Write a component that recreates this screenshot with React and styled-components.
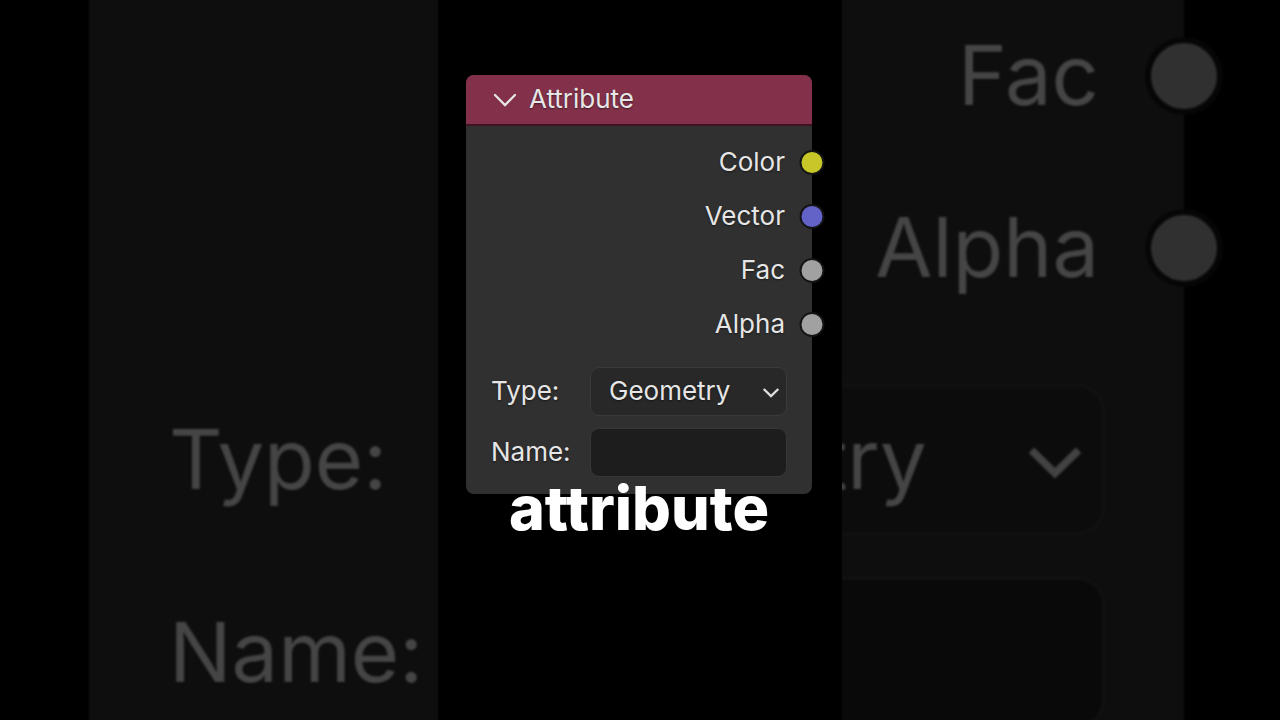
import React, { useId } from "react";
import styled, { createGlobalStyle, ThemeProvider } from "styled-components";

const compact = {
  font: 26,
  radius: 8,
  header: 51,
  headerPad: 27,
  headerGap: 12,
  arrow: 24,
  line: 2,
  bodyTop: 9,
  row: 54,
  rowPad: 27,
  socket: 25,
  ring: 2,
  fieldsTop: 16,
  fieldsBottom: 17,
  fieldsLeft: 25,
  fieldsRight: 25,
  fieldGap: 12,
  labelCol: 99,
  field: 49,
  fieldPad: 18,
  fieldRadius: 9,
  border: 1,
  caret: 18,
  caretRight: 7,
};

const large = {
  font: 83,
  radius: 25,
  header: 158,
  headerPad: 86,
  headerGap: 38,
  arrow: 76,
  line: 6,
  bodyTop: 32,
  row: 172,
  rowPad: 85,
  socket: 78,
  ring: 6,
  fieldsTop: 50,
  fieldsBottom: 57,
  fieldsLeft: 80,
  fieldsRight: 79,
  fieldGap: 42,
  labelCol: 312,
  field: 151,
  fieldPad: 55,
  fieldRadius: 28,
  border: 3,
  caret: 58,
  caretRight: 21,
};

const outputs = [
  { name: "Color", color: "#c7c729" },
  { name: "Vector", color: "#6363c7" },
  { name: "Fac", color: "#a1a1a1" },
  { name: "Alpha", color: "#a1a1a1" },
];

const AttributeNode = () => {
  const id = useId();
  return (
    <Node>
      <Header>
        <Arrow viewBox="0 0 24 24" aria-hidden="true">
          <path d="M2 7 L12 17 L22 7" />
        </Arrow>
        <Title>Attribute</Title>
      </Header>
      <Outputs>
        {outputs.map((output) => (
          <Output key={output.name}>
            {output.name}
            <Socket $color={output.color} />
          </Output>
        ))}
      </Outputs>
      <Fields>
        <Label htmlFor={`${id}-type`}>Type:</Label>
        <SelectWrap>
          <Select id={`${id}-type`} defaultValue="Geometry">
            <option>Geometry</option>
          </Select>
          <Caret viewBox="0 0 18 18" aria-hidden="true">
            <path d="M1.7 6 L9 13.1 L16.3 6" />
          </Caret>
        </SelectWrap>
        <Label htmlFor={`${id}-name`}>Name:</Label>
        <Input id={`${id}-name`} type="text" />
      </Fields>
    </Node>
  );
};

const App = () => {
  return (
    <Stage>
      <GlobalStyle />
      <ThemeProvider theme={large}>
        <Backdrop aria-hidden="true" inert>
          <AttributeNode />
        </Backdrop>
      </ThemeProvider>
      <ThemeProvider theme={compact}>
        <Clip>
          <AttributeNode />
          <Caption>attribute</Caption>
        </Clip>
      </ThemeProvider>
    </Stage>
  );
};

const GlobalStyle = createGlobalStyle`
  * {
    box-sizing: border-box;
  }
  body {
    margin: 0;
    background: #000;
    font-family: Inter, "Liberation Sans", sans-serif;
  }
`;

const Stage = styled.main`
  position: relative;
  display: flex;
  justify-content: center;
  min-height: 100vh;
  overflow: hidden;
  background: #000;
`;

const Backdrop = styled.div`
  position: absolute;
  inset: 0 0 -65px;
  display: flex;
  flex-direction: column;
  justify-content: flex-end;
  padding: 0 96px 0 89px;
  filter: brightness(0.3) blur(1px);
`;

const Clip = styled.section`
  position: relative;
  width: 100%;
  max-width: 404px;
  padding: 75px 30px 0 28px;
  background: #000;
`;

const Node = styled.article`
  border-radius: ${({ theme }) => theme.radius}px;
  background: #303030;
  color: #e6e6e6;
  font-size: ${({ theme }) => theme.font}px;
  line-height: 1.25;
  text-shadow: 0 1px 2px rgba(0, 0, 0, 0.5);
`;

const Header = styled.header`
  display: flex;
  align-items: center;
  gap: ${({ theme }) => theme.headerGap}px;
  height: ${({ theme }) => theme.header}px;
  padding: 0 ${({ theme }) => theme.headerPad}px;
  border-bottom: ${({ theme }) => theme.line}px solid #3f1422;
  border-radius: ${({ theme }) => `${theme.radius}px ${theme.radius}px`} 0 0;
  background: #83314a;
`;

const Title = styled.h1`
  margin: 0;
  font-size: inherit;
  font-weight: 400;
`;

const Arrow = styled.svg`
  width: ${({ theme }) => theme.arrow}px;
  height: ${({ theme }) => theme.arrow}px;
  fill: none;
  stroke: #e6e6e6;
  stroke-width: 2.3;
  stroke-linecap: round;
`;

const Outputs = styled.ul`
  margin: 0;
  padding: ${({ theme }) => theme.bodyTop}px 0 0;
  list-style: none;
`;

const Output = styled.li`
  position: relative;
  display: flex;
  align-items: center;
  justify-content: flex-end;
  height: ${({ theme }) => theme.row}px;
  padding-right: ${({ theme }) => theme.rowPad}px;
`;

const Socket = styled.span`
  position: absolute;
  right: 0;
  width: ${({ theme }) => theme.socket}px;
  height: ${({ theme }) => theme.socket}px;
  border: ${({ theme }) => theme.ring}px solid #141414;
  border-radius: 50%;
  background: ${({ $color }) => $color};
  transform: translateX(50%);
`;

const Fields = styled.div`
  display: grid;
  grid-template-columns: ${({ theme }) => theme.labelCol}px 1fr;
  align-items: center;
  row-gap: ${({ theme }) => theme.fieldGap}px;
  padding: ${({ theme }) =>
    `${theme.fieldsTop}px ${theme.fieldsRight}px ${theme.fieldsBottom}px ${theme.fieldsLeft}px`};
`;

const Label = styled.label``;

const SelectWrap = styled.div`
  position: relative;
  display: flex;
  align-items: center;
`;

const Select = styled.select`
  appearance: none;
  width: 100%;
  height: ${({ theme }) => theme.field}px;
  padding: 0 ${({ theme }) => theme.fieldPad}px;
  border: ${({ theme }) => theme.border}px solid #3a3a3a;
  border-radius: ${({ theme }) => theme.fieldRadius}px;
  background: #282828;
  color: inherit;
  font: inherit;
  text-shadow: inherit;
`;

const Caret = styled.svg`
  position: absolute;
  right: ${({ theme }) => theme.caretRight}px;
  width: ${({ theme }) => theme.caret}px;
  height: ${({ theme }) => theme.caret}px;
  fill: none;
  stroke: #dcdcdc;
  stroke-width: 2.4;
  pointer-events: none;
`;

const Input = styled.input`
  width: 100%;
  height: ${({ theme }) => theme.field}px;
  padding: 0 ${({ theme }) => theme.fieldPad}px;
  border: ${({ theme }) => theme.border}px solid #373737;
  border-radius: ${({ theme }) => theme.fieldRadius}px;
  background: #1d1d1d;
  color: inherit;
  font: inherit;
`;

const Caption = styled.p`
  margin: -16px 0 0;
  color: #fff;
  font-size: 61px;
  font-weight: 800;
  line-height: 60px;
  text-align: center;
`;

export default App;
